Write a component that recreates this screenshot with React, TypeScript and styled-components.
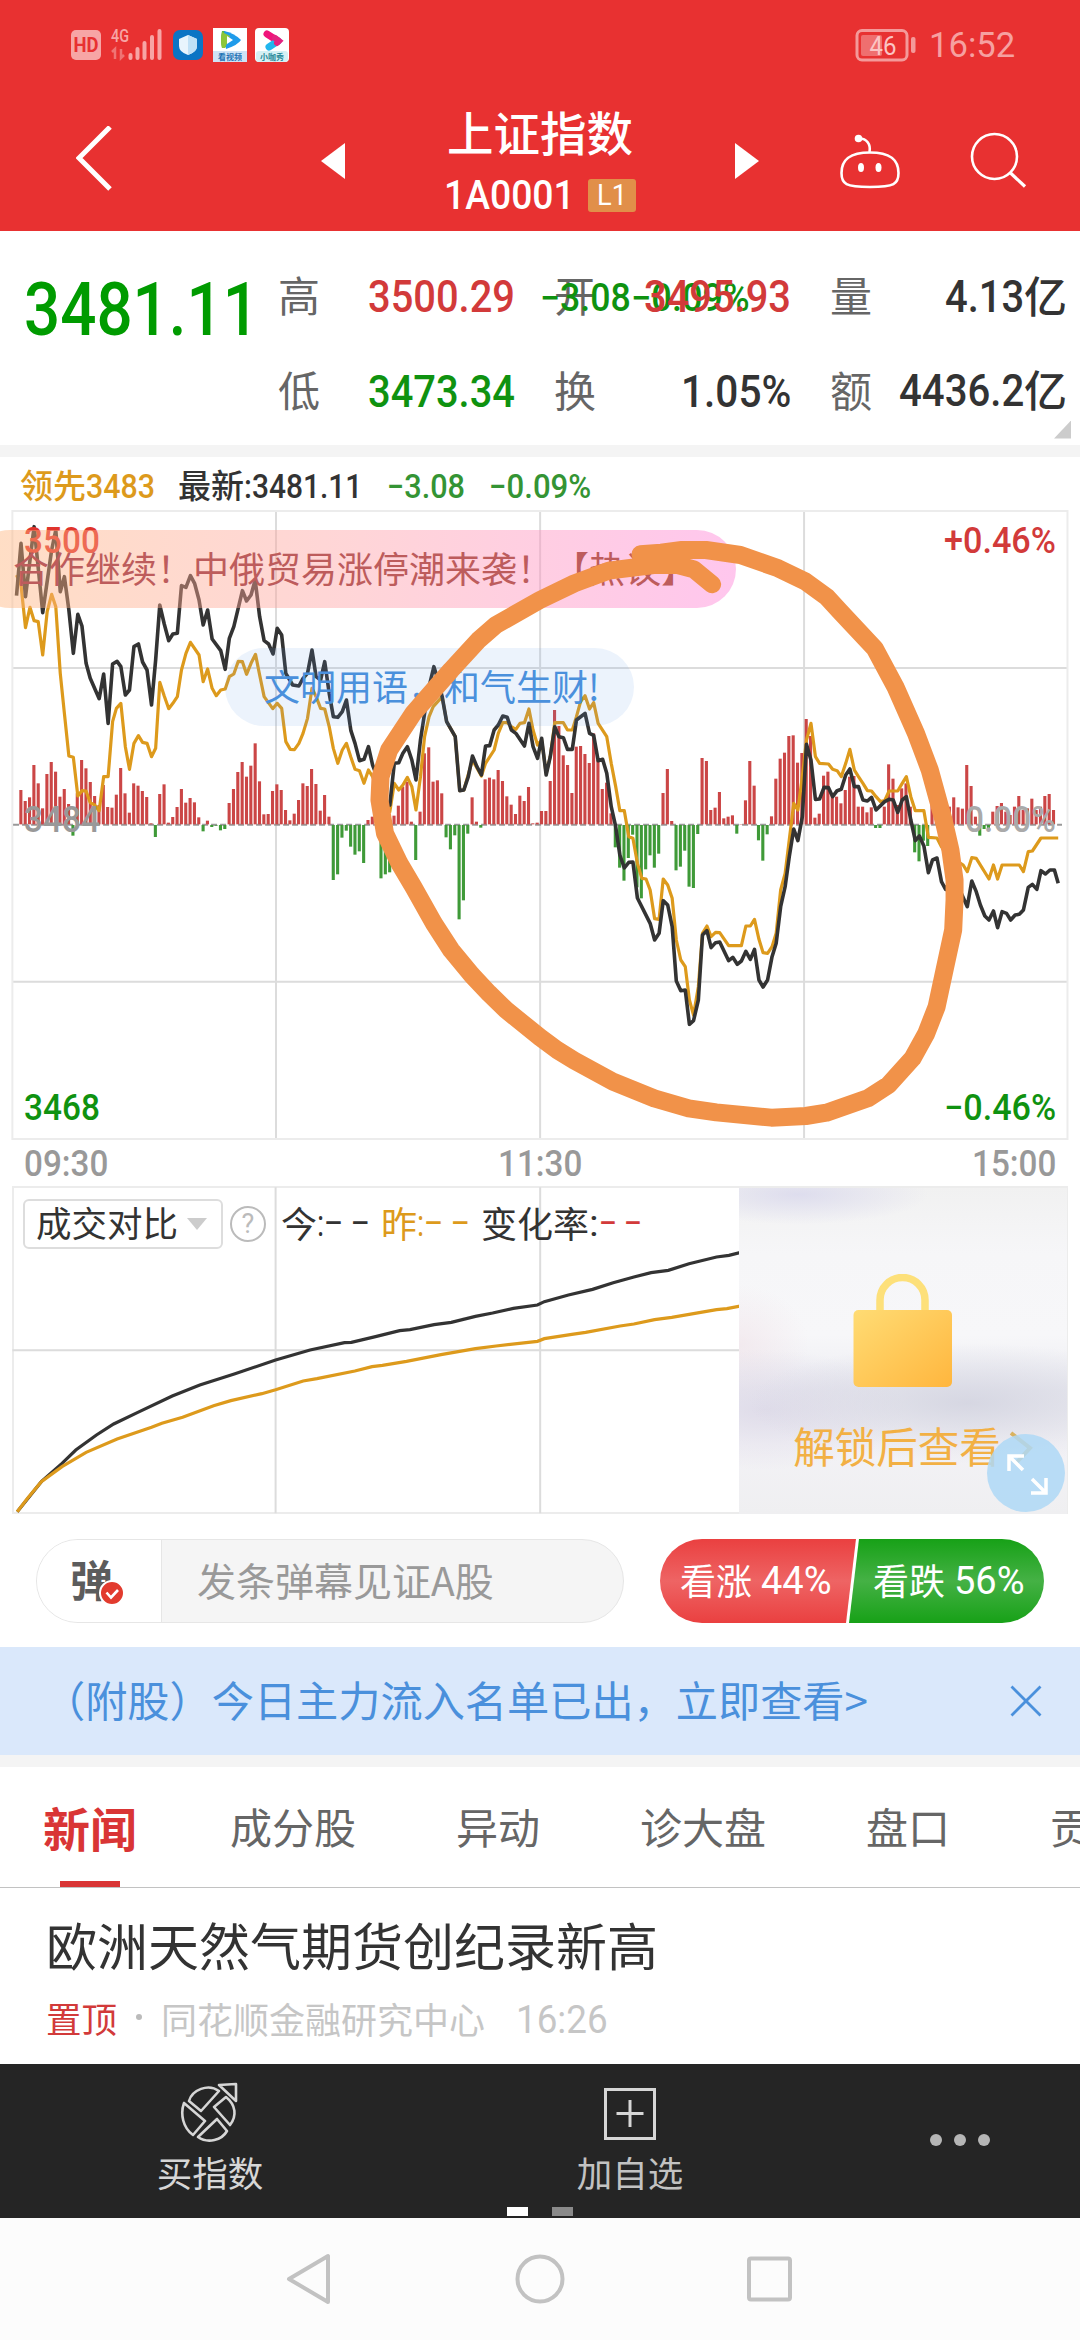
import React, { useLayoutEffect, useRef, useState } from "react";
import styled, { createGlobalStyle } from "styled-components";

const CJK = `"Noto Sans CJK SC", sans-serif`;
const NUM = `Roboto, "Noto Sans CJK SC", sans-serif`;

const GlobalStyle = createGlobalStyle`
  html, body { margin: 0; padding: 0; background: #fff; }
  *, *::before, *::after { box-sizing: border-box; }
  body { font-family: ${CJK}; color: #333; }
  svg { display: block; }
`;

/* ---------- condensed figures ---------- */

const FitBox = styled.span<{ $w: number; $size: number; $color: string; $weight: number }>`
  display: inline-block;
  flex: none;
  width: ${(p) => p.$w}px;
  height: ${(p) => p.$size}px;
  line-height: ${(p) => p.$size}px;
  font-family: ${NUM};
  font-size: ${(p) => p.$size}px;
  font-weight: ${(p) => p.$weight};
  color: ${(p) => p.$color};
  white-space: nowrap;
`;
const FitInner = styled.span`
  display: inline-block;
  transform-origin: 0 50%;
`;

type FitProps = { w: number; size: number; color?: string; weight?: number; children: React.ReactNode };

/** Figures squeezed to a given width, the way a DIN face sets them. */
function Fit({ w, size, color = "#333", weight = 500, children }: FitProps) {
  const ref = useRef<HTMLSpanElement>(null);
  const [scale, setScale] = useState(1);
  useLayoutEffect(() => {
    if (ref.current) setScale(w / ref.current.offsetWidth);
  }, [w, size, children]);
  return (
    <FitBox $w={w} $size={size} $color={color} $weight={weight}>
      <FitInner ref={ref} style={{ transform: `scaleX(${scale})` }}>
        {children}
      </FitInner>
    </FitBox>
  );
}

const Han = styled.span<{ $size: number; $color?: string; $weight?: number }>`
  display: block;
  flex: none;
  font-family: ${CJK};
  font-size: ${(p) => p.$size}px;
  line-height: ${(p) => p.$size}px;
  height: ${(p) => p.$size}px;
  margin-bottom: ${(p) => p.$size * 0.1}px;
  font-weight: ${(p) => p.$weight ?? 400};
  color: ${(p) => p.$color ?? "#333"};
  white-space: nowrap;
`;

const Page = styled.div`
  width: 1080px;
  height: 2340px;
  display: flex;
  flex-direction: column;
  background: #fff;
  overflow: hidden;
`;

/* ---------- header ---------- */

const Header = styled.header`
  height: 231px;
  flex: none;
  background: #e83131;
`;
const StatusBar = styled.div`
  height: 90px;
  display: flex;
  justify-content: space-between;
  align-items: center;
  padding: 0 65px 0 70px;
`;
const StatusSide = styled.div`
  display: flex;
  align-items: center;
`;
const TitleBar = styled.div`
  height: 141px;
  display: flex;
  align-items: center;
  padding-left: 76px;
`;
const IconSlot = styled.div<{ $ml?: number }>`
  flex: none;
  margin-left: ${(p) => p.$ml ?? 0}px;
`;
const TitleBlock = styled.div`
  width: 270px;
  margin-left: 60px;
  padding-top: 8px;
  display: flex;
  flex-direction: column;
  align-items: center;
`;
const TitleLine = styled.div`
  height: 62px;
  display: flex;
  align-items: center;
`;
const LevelBadge = styled.span`
  width: 48px;
  height: 33px;
  margin-left: 13px;
  display: flex;
  align-items: center;
  justify-content: center;
  border-radius: 3px;
  background: #e18f49;
`;

/* ---------- quote ---------- */

const Quote = styled.section`
  height: 214px;
  flex: none;
  display: grid;
  grid-template-columns: 278px 237px 39px 237px 39px 237px 13px;
  grid-template-rows: 131px 58px 25px;
  align-items: center;
`;
const PriceCell = styled.div`
  padding: 27px 0 0 24px;
  align-self: center;
`;
const ChangeCell = styled.div`
  display: flex;
  justify-content: space-between;
  padding: 3px 18px 0 25px;
`;
const Pair = styled.div<{ $col: number; $row: number }>`
  grid-column: ${(p) => p.$col};
  grid-row: ${(p) => p.$row};
  display: flex;
  align-items: center;
  justify-content: space-between;
`;
const PairValue = styled.div`
  display: flex;
  align-items: center;
`;
const Corner = styled.div`
  grid-column: 6 / 8;
  grid-row: 3;
  justify-self: end;
  margin: 0 9px 6px 0;
  width: 17px;
  height: 18px;
  background: #ccc;
  clip-path: polygon(100% 0, 100% 100%, 0 100%);
`;
const Gap = styled.div`
  height: 12px;
  flex: none;
  background: #f4f4f4;
`;

/* ---------- charts ---------- */

const Legend = styled.div`
  height: 53px;
  flex: none;
  display: flex;
  align-items: center;
  padding: 5px 0 0 20px;
`;
const Spacer = styled.span<{ $w: number }>`
  width: ${(p) => p.$w}px;
  flex: none;
`;
const MinuteChart = styled.section`
  position: relative;
  height: 630px;
  flex: none;
`;
const Layer = styled.svg`
  position: absolute;
  left: 0;
  top: 0;
  width: 1080px;
  height: 630px;
  overflow: visible;
`;
const AxisLabel = styled.div<{ $side: "left" | "right"; $top: number }>`
  position: absolute;
  ${(p) => p.$side}: 24px;
  top: ${(p) => p.$top}px;
  height: 36px;
`;
const Barrage = styled.div<{ $left: number; $top: number; $w: number; $bg: string; $pad: number }>`
  position: absolute;
  left: ${(p) => p.$left}px;
  top: ${(p) => p.$top}px;
  width: ${(p) => p.$w}px;
  height: 78px;
  padding-left: ${(p) => p.$pad}px;
  display: flex;
  align-items: center;
  border-radius: 39px;
  background: ${(p) => p.$bg};
`;
const TimeAxis = styled.div`
  height: 46px;
  flex: none;
  display: flex;
  align-items: center;
  justify-content: space-between;
  padding: 2px 24px 0;
`;
const CompareChart = styled.section`
  position: relative;
  height: 328px;
  flex: none;
  margin: 0 12px;
  display: flex;
  justify-content: space-between;
  border: 2px solid #ececec;
`;
const CompareSvg = styled.svg`
  position: absolute;
  left: -14px;
  top: -2px;
  width: 740px;
  height: 328px;
`;
const CompareBar = styled.div`
  position: relative;
  display: flex;
  align-items: center;
  height: 50px;
  margin: 11px 0 0 9px;
`;
const Picker = styled.div`
  width: 200px;
  height: 50px;
  display: flex;
  align-items: center;
  padding-left: 11px;
  border: 2px solid #ddd;
  border-radius: 6px;
`;
const Caret = styled.span`
  margin-left: 9px;
  border: 10px solid transparent;
  border-top: 12px solid #ccc;
  border-bottom: 0;
`;
const Help = styled.span`
  width: 36px;
  height: 36px;
  margin: 0 15px 0 7px;
  display: flex;
  align-items: center;
  justify-content: center;
  border: 2px solid #bbb;
  border-radius: 50%;
  font: 400 27px/30px ${NUM};
  color: #bbb;
`;
const LockPanel = styled.div`
  position: relative;
  width: 328px;
  height: 326px;
  margin-right: -1px;
  display: flex;
  flex-direction: column;
  align-items: center;
  background:
    radial-gradient(130px 30px at 18% 2%, rgba(215, 214, 236, 0.75), transparent),
    radial-gradient(220px 60px at 70% 66%, rgba(208, 209, 222, 0.8), transparent),
    radial-gradient(140px 60px at 8% 68%, rgba(218, 214, 230, 0.75), transparent),
    radial-gradient(70px 60px at 0% 48%, rgba(240, 226, 232, 0.6), transparent),
    linear-gradient(#f1f1f1, #f6f6f8 20%, #f7f7f9 45%, #ececf2 62%, #f3f2f6 78%, #efeff1);
`;
const UnlockLine = styled.div`
  display: flex;
  align-items: center;
  margin: 37px 0 0 22px;
`;
const ExpandButton = styled.div`
  position: absolute;
  right: 2px;
  top: 246px;
  width: 78px;
  height: 78px;
  border-radius: 50%;
  background: rgba(174, 216, 246, 0.85);
`;

/* ---------- comments + vote ---------- */

const TalkRow = styled.section`
  height: 133px;
  flex: none;
  display: flex;
  justify-content: space-between;
  padding: 25px 36px 0;
`;
const TalkInput = styled.div`
  width: 588px;
  height: 84px;
  display: flex;
  border: 1px solid #e6e6e6;
  border-radius: 42px;
  overflow: hidden;
  background: #f5f5f5;
`;
const TalkToggle = styled.div`
  position: relative;
  width: 125px;
  padding: 0 0 0 33px;
  display: flex;
  align-items: center;
  border-right: 1px solid #e6e6e6;
  background: #fff;
`;
const ToggleTick = styled.svg`
  position: absolute;
  left: 61px;
  top: 39px;
`;
const Placeholder = styled.div`
  display: flex;
  align-items: center;
  padding-left: 35px;
`;
const Vote = styled.div`
  width: 384px;
  height: 84px;
  display: flex;
  border-radius: 42px;
  overflow: hidden;
`;
const VoteSide = styled.div<{ $up?: boolean }>`
  width: ${(p) => (p.$up ? 197 : 196)}px;
  margin-left: ${(p) => (p.$up ? 0 : -9)}px;
  flex: none;
  display: flex;
  align-items: center;
  padding-left: ${(p) => (p.$up ? 20 : 25)}px;
  background: ${(p) =>
    p.$up ? "linear-gradient(#ea4040, #ee6464 50%, #ea4040)" : "linear-gradient(#17a117, #45b145 50%, #17a117)"};
  clip-path: ${(p) =>
    p.$up ? "polygon(0 0, 196px 0, 186px 100%, 0 100%)" : "polygon(11px 0, 100% 0, 100% 100%, 1px 100%)"};
`;
const Notice = styled.div`
  height: 108px;
  flex: none;
  display: flex;
  align-items: center;
  justify-content: space-between;
  padding: 0 38px 0 43px;
  background: #dae8fb;
`;

/* ---------- news ---------- */

const Tabs = styled.nav`
  height: 121px;
  flex: none;
  display: flex;
  gap: 100px;
  padding-left: 43px;
  border-bottom: 1px solid #c2c2c2;
  overflow: hidden;
`;
const Tab = styled.div<{ $active?: boolean }>`
  flex: none;
  display: flex;
  flex-direction: column;
  align-items: center;
  justify-content: center;
  border-bottom: 0;
  padding-top: 3px;
  margin-right: ${(p) => (p.$active ? -7 : 0)}px;
  background: ${(p) =>
    p.$active ? "linear-gradient(#d93535, #d93535) 17px 100% / 60px 6px no-repeat" : "none"};
`;
const News = styled.article`
  height: 176px;
  flex: none;
  padding: 31px 0 0 46px;
`;
const Meta = styled.div`
  display: flex;
  align-items: center;
  height: 40px;
  margin-top: 30px;
`;
const Dot = styled.span`
  width: 6px;
  height: 6px;
  margin: 0 19px 6px;
  border-radius: 50%;
  background: #bbb;
`;

/* ---------- bottom ---------- */

const ActionBar = styled.footer`
  height: 154px;
  flex: none;
  display: grid;
  grid-template-columns: 420px 420px 240px;
  grid-template-rows: 143px 9px;
  background: #252525;
`;
const Action = styled.div`
  display: flex;
  flex-direction: column;
  align-items: center;
  gap: 10px;
  padding-top: 18px;
`;
const More = styled.div`
  display: flex;
  justify-content: center;
  gap: 12px;
  padding-top: 70px;
`;
const MoreDot = styled.span`
  width: 12px;
  height: 12px;
  border-radius: 50%;
  background: #b6b6b6;
`;
const Pager = styled.div`
  grid-column: 1 / 4;
  display: flex;
  justify-content: center;
  gap: 24px;
`;
const PagerMark = styled.span<{ $on?: boolean }>`
  width: 21px;
  height: 9px;
  background: ${(p) => (p.$on ? "#fff" : "#8a8a8a")};
`;
const NavBar = styled.div`
  flex: 1;
  background: #fcfcfc;
`;

/* ---------- data ---------- */

// One signed bar per minute, starting at 09:31.
const BARS = [
  103, 70, 81, 178, 123, 48, 151, 187, 158, 83, 106, 61, -32, 93, 193, 168, 127, 85, 58, 118, 52, 50, 89, 169, 93, 35,
  123, 116, 100, 82, 3, -36, 91, 120, 5, 22, 52, 106, 65, 79, 66, 21, -19, 11, -6, -2, -16, -12, 64, 106, 157, 187,
  143, 176, 243, 129, 30, 31, 100, 120, 103, 43, 12, 32, 73, 123, 115, 166, 121, 41, 88, 23, -165, -148, -38, -17,
  -65, -89, -79, -114, 13, 23, 33, -160, -148, -142, 26, 56, 113, 128, 8, -105, 38, 213, 231, 128, 132, 93, -37, -73,
  -31, -283, -226, -26, 81, 8, -8, 135, 140, 135, 163, 130, 84, 59, 31, 86, 70, 112, 3, 5, 40, 40, 130, 343, 295, 207,
  178, 94, 233, 235, 211, 184, 273, 193, 106, 125, 33, -67, -128, -167, -99, -29, -187, -220, -133, -91, -128, -86,
  94, 166, 10, -136, -125, -77, -185, -189, -27, 199, 190, 43, 50, 97, 18, 23, 27, -26, 1, 72, 190, 116, -46, -107,
  -28, 24, 137, 197, 215, 265, 267, 185, 214, 316, 265, 20, 32, 146, 158, 86, 83, 63, 103, 143, 145, 53, 53, 36, 51,
  -9, -9, 53, 180, 137, 58, 108, 123, 53, -82, -109, -47, -63, 63, 73, 60, 50, 53, 81, 51, 47, 178, 115, 23, -32, -12,
  -12, 38, 55, 64, 38, 28, 53, 85, 43, 48, 77, 43, 53, 85, 91, 43,
];

const PRICE =
  "48,287 61,130 74,290 99,80 124,338 150,150 162,90 175,275 187,230 200,330 213,460 226,343 238,378 250,490 262,535 288,596 301,522 314,670 327,492 340,484 351,500 364,585 376,570 389,440 402,432 414,486 427,510 440,615 452,480 464,315 477,372 490,422 502,402 515,400 527,257 540,262 553,227 565,250 578,300 590,375 603,330 616,417 641,452 654,508 666,415 679,380 704,272 716,303 729,285 741,240 754,350 767,422 780,432 793,462 805,385 818,405 830,520 850,555 868,558 880,535 893,520 906,450 918,530 931,540 943,485 956,580 968,650 981,652 994,635 1006,600 1019,692 1031,730 1044,782 1057,778 1070,740 1082,795 1095,830 1110,900 1132,915 1145,790 1158,788 1170,760 1183,740 1196,780 1208,840 1221,720 1233,640 1246,560 1260,500 1272,540 1284,590 1297,665 1322,710 1335,872 1347,870 1360,830 1372,768 1385,800 1398,825 1410,738 1422,737 1435,690 1447,675 1460,648 1473,652 1485,690 1498,700 1523,738 1536,670 1548,740 1561,775 1573,715 1586,825 1598,770 1611,680 1623,710 1636,713 1648,748 1662,748 1674,660 1699,640 1712,700 1724,706 1737,782 1750,778 1762,820 1775,920 1788,980 1800,1065 1813,1104 1826,1087 1838,1086 1851,1194 1888,1270 1901,1320 1914,1300 1926,1202 1939,1215 1952,1280 1964,1443 1977,1472 1990,1470 2002,1573 2014,1562 2028,1500 2040,1305 2053,1292 2065,1343 2078,1328 2090,1326 2116,1382 2128,1372 2141,1393 2153,1383 2166,1354 2179,1378 2191,1348 2204,1440 2216,1461 2229,1440 2242,1370 2254,1330 2267,1220 2280,1160 2292,1070 2305,987 2317,1022 2330,950 2342,733 2355,780 2368,898 2380,897 2393,862 2406,863 2418,890 2431,872 2443,868 2456,825 2468,807 2481,860 2493,860 2506,900 2519,903 2531,892 2544,930 2569,905 2582,898 2594,900 2607,937 2620,900 2632,890 2645,960 2658,1022 2670,1008 2683,1038 2696,1118 2708,1080 2721,1074 2734,1145 2746,1168 2760,1140 2783,1160 2809,1220 2822,1143 2835,1175 2847,1215 2860,1248 2872,1260 2885,1233 2897,1283 2910,1235 2923,1240 2935,1260 2948,1245 2960,1243 2972,1230 2986,1162 2998,1153 3011,1168 3023,1112 3036,1122 3049,1110 3062,1110 3073,1150";

const LEAD =
  "48,225 61,255 74,383 87,322 99,362 111,365 124,465 137,335 150,283 162,320 175,520 187,640 200,768 213,772 226,888 238,872 250,873 262,908 275,915 288,932 301,830 314,830 327,665 338,625 351,610 364,740 376,808 389,730 402,707 414,727 427,730 440,770 452,745 464,547 477,588 490,626 502,610 515,590 527,510 540,460 553,427 578,465 590,545 603,507 616,565 628,587 641,570 654,567 666,530 679,522 692,484 704,485 716,523 729,490 742,463 754,525 767,590 792,626 805,610 818,625 830,725 843,748 855,749 868,730 880,700 893,655 906,565 918,590 931,625 943,627 956,680 968,745 981,790 994,750 1006,730 1019,772 1031,808 1044,812 1057,850 1070,810 1082,830 1110,900 1132,935 1145,850 1158,870 1170,855 1183,832 1196,860 1208,930 1221,830 1233,710 1246,650 1258,620 1284,590 1297,665 1322,710 1335,872 1347,870 1372,780 1398,828 1410,790 1435,750 1447,700 1460,668 1473,668 1485,680 1498,688 1510,670 1523,668 1536,627 1548,690 1561,735 1573,720 1586,820 1598,770 1611,668 1636,668 1648,690 1662,690 1674,650 1686,605 1699,587 1712,627 1724,608 1737,670 1762,710 1775,790 1788,860 1800,932 1813,932 1826,1010 1838,1015 1851,1090 1864,1135 1876,1137 1888,1170 1901,1256 1914,1258 1926,1137 1939,1155 1952,1195 1964,1320 1977,1380 1990,1400 2002,1500 2014,1545 2028,1460 2040,1300 2053,1278 2065,1310 2078,1297 2090,1298 2116,1337 2153,1337 2166,1278 2179,1278 2191,1258 2204,1318 2216,1358 2229,1360 2242,1340 2254,1300 2267,1170 2280,1120 2292,1020 2305,910 2317,930 2330,830 2342,720 2355,670 2368,770 2380,790 2406,792 2418,808 2431,812 2443,830 2456,790 2468,748 2481,810 2493,830 2506,850 2519,872 2531,873 2544,890 2557,905 2569,902 2582,873 2607,873 2620,850 2632,830 2645,890 2658,932 2683,932 2696,1012 2721,1014 2734,1040 2760,1070 2797,1095 2809,1115 2822,1073 2835,1075 2872,1137 2885,1095 2897,1137 2910,1095 2960,1095 2972,1115 2986,1055 2998,1053 3023,1014 3073,1014";

const MARKER =
  "1860,163 1920,158 1980,150 2050,150 2150,165 2260,205 2340,245 2400,290 2440,335 2540,445 2600,560 2660,700 2700,810 2740,960 2760,1050 2772,1140 2772,1200 2768,1290 2745,1400 2720,1520 2690,1600 2650,1675 2580,1755 2520,1795 2400,1838 2340,1848 2240,1853 2080,1837 2000,1825 1900,1795 1780,1745 1668,1682 1618,1650 1568,1612 1470,1530 1420,1480 1370,1425 1310,1350 1260,1270 1200,1160 1160,1090 1118,1000 1102,900 1105,830 1130,750 1200,640 1310,510 1390,420 1440,375 1568,300 1668,250 1768,212 1898,195 1968,195 2015,208 2068,253";

const TODAY =
  "25,995 60,905 90,850 110,810 140,765 165,732 200,697 250,648 290,615 340,582 400,540 450,510 500,488 510,487 545,470 580,452 595,449 630,434 655,427 690,409 715,399 745,385 780,375 790,365 825,345 860,328 890,308 920,291 945,278 970,271 1000,251 1040,231 1058,226 1074,218";
const YESTERDAY =
  "25,995 40,955 60,905 90,860 125,817 170,777 220,742 235,730 265,712 310,677 335,662 380,641 400,629 440,603 460,596 515,573 540,560 555,556 590,544 640,524 690,506 720,498 780,484 790,476 830,463 850,457 900,438 920,432 950,419 975,412 1040,389 1055,386 1074,378";

const RED = "#d23a3a";
const GREEN = "#0f9210";
const AMBER = "#dd9a1c";

/* ---------- drawings ---------- */

const StatusIcons = () => (
  <svg width="222" height="36" viewBox="70 27 222 36">
    <rect x="71" y="30" width="30" height="30" rx="5" fill="#f7a5a5" />
    <text x="86" y="52" textAnchor="middle" fontFamily="Roboto" fontWeight="700" fontSize="20" textLength="25" lengthAdjust="spacingAndGlyphs" fill="#e83131">HD</text>
    <text x="111" y="42" fontFamily="Roboto" fontWeight="500" fontSize="18" textLength="18" lengthAdjust="spacingAndGlyphs" fill="#f7a5a5">4G</text>
    <path d="M112 52l3-3v10M121 49v9l3-3" stroke="#ef7474" strokeWidth="2.5" fill="none" />
    <path d="M130.500 55v3M137.500 49v9M144.500 43v15M152 37v21M159.500 31v27" stroke="#f7a5a5" strokeWidth="4" strokeLinecap="round" />
    <rect x="173" y="30" width="30" height="30" rx="7" fill="#0b74c4" />
    <path d="M188 35l9 4v7q0 6-9 9q-9-3-9-9v-7z" fill="#e8f4fd" />
    <path d="M188 35l9 4v7q0 6-9 9z" fill="#bfe0f6" />
    <rect x="213" y="28" width="34" height="34" fill="#fff" />
    <path d="M222 31q-2 9 0 17q3 0 8-3l-5-14z" fill="#58b947" />
    <path d="M224 31q10 2 17 9q-3 5-15 9z" fill="#1f9bea" />
    <path d="M222 32l8 4-5 12-3 0q-2-8 0-16z" fill="#8cc63a" />
    <path d="M227 36l6 4-6 4z" fill="#fff" />
    <rect x="213" y="51" width="34" height="11" fill="#cfe3f6" />
    <text x="230" y="60" textAnchor="middle" fontFamily="Noto Sans CJK SC" fontWeight="700" fontSize="8" fill="#2273b5">看视频</text>
    <rect x="255" y="28" width="34" height="34" rx="4" fill="#fff" />
    <path d="M267 34l11 7" stroke="#f0137b" strokeWidth="7" strokeLinecap="round" />
    <path d="M278 41l-9 6" stroke="#21b6ee" strokeWidth="7" strokeLinecap="round" />
    <path d="M275 38l4 3-2 2" stroke="#e3237f" strokeWidth="6" strokeLinecap="round" fill="none" />
    <rect x="256" y="51" width="32" height="11" rx="3" fill="#d5f0f4" />
    <text x="272" y="60" textAnchor="middle" fontFamily="Noto Sans CJK SC" fontWeight="700" fontSize="8" fill="#2a8a9a">小咖秀</text>
  </svg>
);

const Battery = () => (
  <svg width="62" height="34" viewBox="855 27 62 34">
    <rect x="857" y="29.500" width="50" height="29.500" rx="5" fill="none" stroke="#f49a9a" strokeWidth="3" />
    <rect x="861" y="34" width="21" height="21" rx="2" fill="#ef6f6f" />
    <rect x="911" y="36" width="4.500" height="16" rx="2" fill="#f49a9a" />
    <text x="883" y="54" textAnchor="middle" fontFamily="Roboto" fontSize="25" textLength="27" lengthAdjust="spacingAndGlyphs" fill="#fbc4c4">46</text>
  </svg>
);

const Robot = () => (
  <svg width="64" height="60" viewBox="838 130 64 60" fill="none" stroke="#fff" strokeWidth="2.600">
    <path d="M841.500 172c0-14 9-20.500 28.500-20.500s28.500 6.500 28.500 20.500c0 11-4 14-28.500 14s-28.500-3-28.500-14z" />
    <path d="M869.500 151c1.500-8-3-13.500-10-13.500" />
    <circle cx="858.500" cy="137.500" r="2.800" fill="#fff" stroke="none" style={undefined} />
    <circle cx="858.500" cy="137.500" r="2.500" fill="#fff" />
    <ellipse cx="861" cy="166.500" rx="3" ry="4.500" fill="#fff" stroke="none" />
    <ellipse cx="878.500" cy="166.500" rx="3" ry="4.500" fill="#fff" stroke="none" />
  </svg>
);

function MinuteLines() {
  return (
    <Layer viewBox="0 30 3136.300 1890" preserveAspectRatio="none">
      <g fill="none" stroke="#dcdcdc" strokeWidth="2">
        <path vectorEffect="non-scaling-stroke" d="M36 504H3100M36 1445H3100M801.500 33V1917M1568.500 33V1917M2335 33V1917" />
        <path vectorEffect="non-scaling-stroke" stroke="#ececec" d="M36 33H3100V1917H36z" />
        <path vectorEffect="non-scaling-stroke" stroke="#999" strokeDasharray="6 3" d="M38 974H3084" />
      </g>
      {BARS.map((v, i) => (
        <rect
          key={i}
          x={48 + 12.6 * (i + 1) - 4.5}
          width="9"
          y={v > 0 ? 973 - v : 975}
          height={Math.abs(v)}
          fill={v > 0 ? "#cb4646" : "#3f9a38"}
        />
      ))}
      <g fill="none" strokeLinejoin="round" strokeWidth="3.200">
        <polyline vectorEffect="non-scaling-stroke" stroke={AMBER} points={LEAD} />
        <polyline vectorEffect="non-scaling-stroke" stroke="#333" strokeWidth="3.600" points={PRICE} />
      </g>
    </Layer>
  );
}

const Lock = () => (
  <svg width="100" height="114" viewBox="854 1273 100 114">
    <defs>
      <linearGradient id="lockBody" x1="0" y1="0" x2="1" y2="1">
        <stop offset="0" stopColor="#ffdc74" />
        <stop offset="1" stopColor="#ffb63e" />
      </linearGradient>
    </defs>
    <path d="M881 1312V1299a22.500 22.500 0 0 1 45 0V1312" fill="none" stroke="#fde07a" strokeWidth="7.500" />
    <rect x="854.500" y="1309" width="98.500" height="77" rx="5" fill="url(#lockBody)" />
  </svg>
);

const TradeIcon = () => (
  <svg width="60" height="62" viewBox="0 0 60 62" fill="none" stroke="#d6d6d6" strokeWidth="2.600" strokeLinejoin="round">
    <path d="M39 9C28 1 12 8 9 19L21 29Z" />
    <path d="M46 15L34 25L50 43C57 34 56 23 46 15Z" />
    <path d="M4 21C0 32 3 46 13 53L25 39Z" />
    <path d="M37 37L18 55C28 62 42 58 47 49Z" />
    <path d="M39 3L56 2V19Z" />
  </svg>
);

/* ---------- page ---------- */

export default function App() {
  return (
    <Page>
      <GlobalStyle />
      <Header>
        <StatusBar>
          <StatusSide>
            <StatusIcons />
          </StatusSide>
          <StatusSide>
            <Battery />
            <Spacer $w={12} />
            <Fit w={86} size={35} weight={400} color="#f6a0a0">16:52</Fit>
          </StatusSide>
        </StatusBar>
        <TitleBar>
          <IconSlot>
            <svg width="36" height="70" viewBox="76 126 36 70">
              <path d="M110 128L79 159L110 190" transform="translate(0 -1)" fill="none" stroke="#fff" strokeWidth="5" />
            </svg>
          </IconSlot>
          <IconSlot $ml={209}>
            <svg width="24" height="36" viewBox="0 0 24 36"><path d="M24 0V36L0 18z" fill="#fff" /></svg>
          </IconSlot>
          <TitleBlock>
            <TitleLine>
              <Han $size={46.500} $weight={500} $color="#fff">上证指数</Han>
            </TitleLine>
            <TitleLine>
              <Fit w={131} size={41} color="#fff">1A0001</Fit>
              <LevelBadge>
                <Fit w={30} size={29} weight={400} color="#fff">L1</Fit>
              </LevelBadge>
            </TitleLine>
          </TitleBlock>
          <IconSlot $ml={60}>
            <svg width="24" height="36" viewBox="0 0 24 36"><path d="M0 0V36L24 18z" fill="#fff" /></svg>
          </IconSlot>
          <IconSlot $ml={79}>
            <Robot />
          </IconSlot>
          <IconSlot $ml={67}>
            <svg width="60" height="60" viewBox="969 130 60 60" fill="none" stroke="#fff" strokeWidth="2.600">
              <circle cx="994.500" cy="155.500" r="22.500" />
              <path d="M1010 171.500L1025 185.500" strokeWidth="3.200" />
            </svg>
          </IconSlot>
        </TitleBar>
      </Header>

      <Quote>
        <PriceCell>
          <Fit w={235} size={74} color="#009b00">3481.11</Fit>
        </PriceCell>
        <ChangeCell style={undefined}>
          <Fit w={91} size={38} color={GREEN}>−3.08</Fit>
          <Fit w={119} size={38} color={GREEN}>−0.09%</Fit>
        </ChangeCell>
        <Pair $col={2} $row={1}>
          <Han $size={42} $color="#666">高</Han>
          <Fit w={147} size={45} color={RED}>3500.29</Fit>
        </Pair>
        <Pair $col={4} $row={1}>
          <Han $size={42} $color="#666">开</Han>
          <Fit w={147} size={45} color={RED}>3495.93</Fit>
        </Pair>
        <Pair $col={6} $row={1}>
          <Han $size={42} $color="#666">量</Han>
          <PairValue>
            <Fit w={79} size={45}>4.13</Fit>
            <Han $size={43} $weight={500}>亿</Han>
          </PairValue>
        </Pair>
        <Pair $col={2} $row={2}>
          <Han $size={42} $color="#666">低</Han>
          <Fit w={147} size={45} color={GREEN}>3473.34</Fit>
        </Pair>
        <Pair $col={4} $row={2}>
          <Han $size={42} $color="#666">换</Han>
          <Fit w={110} size={45}>1.05%</Fit>
        </Pair>
        <Pair $col={6} $row={2}>
          <Han $size={42} $color="#666">额</Han>
          <PairValue>
            <Fit w={125} size={45}>4436.2</Fit>
            <Han $size={43} $weight={500}>亿</Han>
          </PairValue>
        </Pair>
        <Corner />
      </Quote>
      <Gap />

      <Legend>
        <Han $size={33} $weight={500} $color={AMBER}>领先</Han>
        <Fit w={69} size={33} color={AMBER}>3483</Fit>
        <Spacer $w={23} />
        <Han $size={33} $weight={500}>最新</Han>
        <Fit w={118} size={33}>:3481.11</Fit>
        <Spacer $w={25} />
        <Fit w={78} size={33} color="#349434">−3.08</Fit>
        <Spacer $w={24} />
        <Fit w={102} size={33} color="#349434">−0.09%</Fit>
      </Legend>

      <MinuteChart>
        <MinuteLines />
        <AxisLabel $side="left" $top={13}><Fit w={76} size={36} color="#e0342c">3500</Fit></AxisLabel>
        <AxisLabel $side="right" $top={13}><Fit w={112} size={36} color={RED}>+0.46%</Fit></AxisLabel>
        <AxisLabel $side="left" $top={292}><Fit w={76} size={36} color="#999">3484</Fit></AxisLabel>
        <AxisLabel $side="right" $top={292}><Fit w={91} size={36} color="#aaa">0.00%</Fit></AxisLabel>
        <AxisLabel $side="left" $top={580}><Fit w={76} size={36} color={GREEN}>3468</Fit></AxisLabel>
        <AxisLabel $side="right" $top={580}><Fit w={112} size={36} color={GREEN}>−0.46%</Fit></AxisLabel>
        <Barrage $left={-29} $top={20} $w={765} $pad={42} $bg="linear-gradient(90deg, rgba(255,181,120,.44), rgba(255,160,165,.44) 50%, rgba(255,126,215,.44))">
          <Han $size={36} $color="#bd5c5c">合作继续！中俄贸易涨停潮来袭！【热议】</Han>
        </Barrage>
        <Barrage $left={225} $top={138} $w={409} $pad={39} $bg="rgba(100,155,230,.12)">
          <Han $size={36} $color="#4a90dc">文明用语，和气生财!</Han>
        </Barrage>
        <Layer viewBox="0 30 3136.300 1890" preserveAspectRatio="none">
          <polyline vectorEffect="non-scaling-stroke" points={MARKER} fill="none" stroke="#f19249" strokeWidth="18" strokeLinecap="round" strokeLinejoin="round" />
        </Layer>
      </MinuteChart>

      <TimeAxis>
        <Fit w={84} size={36} color="#999">09:30</Fit>
        <Fit w={84} size={36} color="#999">11:30</Fit>
        <Fit w={84} size={36} color="#999">15:00</Fit>
      </TimeAxis>

      <CompareChart>
        <CompareSvg viewBox="0 18 1074 984" preserveAspectRatio="none">
          <g fill="none">
            <path vectorEffect="non-scaling-stroke" stroke="#dcdcdc" strokeWidth="2" d="M18 511H1074M400 22V1000M784 22V1000" />
            <polyline vectorEffect="non-scaling-stroke" stroke="#333" strokeWidth="3.200" points={TODAY} />
            <polyline vectorEffect="non-scaling-stroke" stroke={AMBER} strokeWidth="3.200" points={YESTERDAY} />
          </g>
        </CompareSvg>
        <CompareBar>
          <Picker>
            <Han $size={35.500}>成交对比</Han>
            <Caret />
          </Picker>
          <Help>?</Help>
          <Han $size={36}>今</Han>
          <Fit w={53} size={36} weight={400}>:– –</Fit>
          <Spacer $w={11} />
          <Han $size={36} $color={AMBER}>昨</Han>
          <Fit w={53} size={36} weight={400} color={AMBER}>:– –</Fit>
          <Spacer $w={11} />
          <Han $size={36}>变化率</Han>
          <Fit w={10} size={36} weight={400}>:</Fit>
          <Fit w={43} size={36} weight={400} color={RED}>– –</Fit>
        </CompareBar>
        <LockPanel>
          <Spacer $w={1} style={undefined} />
          <IconSlot as={LockSlot}>
            <Lock />
          </IconSlot>
          <UnlockLine>
            <Han $size={41.500} $color="#f2b044">解锁后查看</Han>
            <svg width="34" height="40" viewBox="0 0 34 40"><path d="M10 5L29 20L16 34" fill="none" stroke="#d9b25e" strokeWidth="4" /></svg>
          </UnlockLine>
          <ExpandButton>
            <svg width="78" height="78" viewBox="0 0 78 78" fill="none" stroke="#fff" strokeWidth="3.500">
              <path d="M22 37V22H37M22 22L36 36M59 44V59H44M59 59L45 45" />
            </svg>
          </ExpandButton>
        </LockPanel>
      </CompareChart>

      <TalkRow>
        <TalkInput>
          <TalkToggle>
            <Han $size={43} $weight={700} $color="#5c5c5c">弹</Han>
            <ToggleTick width="28" height="28" viewBox="0 0 28 28">
              <circle cx="14" cy="14" r="12" fill="#e23b2e" stroke="#fff" strokeWidth="2" />
              <path d="M8.500 13.500l4.500 5 7-7.500" fill="none" stroke="#fff" strokeWidth="2.600" />
            </ToggleTick>
          </TalkToggle>
          <Placeholder>
            <Han $size={39} $color="#999">发条弹幕见证A股</Han>
          </Placeholder>
        </TalkInput>
        <Vote>
          <VoteSide $up>
            <Han $size={36} $color="#fff">看涨</Han>
            <Spacer $w={9} />
            <Fit w={71} size={38} weight={400} color="#fff">44%</Fit>
          </VoteSide>
          <VoteSide>
            <Han $size={36} $color="#fff">看跌</Han>
            <Spacer $w={9} />
            <Fit w={71} size={38} weight={400} color="#fff">56%</Fit>
          </VoteSide>
        </Vote>
      </TalkRow>

      <Notice>
        <Han $size={42.200} $color="#4a90dc">（附股）今日主力流入名单已出，立即查看&gt;</Han>
        <svg width="32" height="32" viewBox="0 0 32 32"><path d="M1.500 1.500L30.500 30.500M30.500 1.500L1.500 30.500" stroke="#4a90dc" strokeWidth="2.800" /></svg>
      </Notice>
      <Gap />

      <Tabs>
        <Tab $active><Han $size={47} $weight={700} $color="#d93535">新闻</Han></Tab>
        <Tab><Han $size={42} $color="#666">成分股</Han></Tab>
        <Tab><Han $size={42} $color="#666">异动</Han></Tab>
        <Tab><Han $size={42} $color="#666">诊大盘</Han></Tab>
        <Tab><Han $size={42} $color="#666">盘口</Han></Tab>
        <Tab><Han $size={42} $color="#666">贡献</Han></Tab>
      </Tabs>

      <News>
        <Han $size={51}>欧洲天然气期货创纪录新高</Han>
        <Meta>
          <Han $size={35.500} $color={RED}>置顶</Han>
          <Dot />
          <Han $size={36} $color="#c6c6c6">同花顺金融研究中心</Han>
          <Spacer $w={31} />
          <Fit w={92} size={38} weight={400} color="#c6c6c6">16:26</Fit>
        </Meta>
      </News>

      <ActionBar>
        <Action>
          <TradeIcon />
          <Han $size={35.500} $color="#d6d6d6">买指数</Han>
        </Action>
        <Action>
          <svg width="60" height="62" viewBox="0 0 60 62" fill="none" stroke="#d6d6d6" strokeWidth="3">
            <path d="M5.500 7.500H54.500V56.500H5.500zM30 18V45M16.500 31.500H43.500" />
          </svg>
          <Han $size={35.500} $color="#c2c2c2">加自选</Han>
        </Action>
        <More>
          <MoreDot />
          <MoreDot />
          <MoreDot />
        </More>
        <Pager>
          <PagerMark $on />
          <PagerMark />
        </Pager>
      </ActionBar>

      <NavBar>
        <svg width="1080" height="122" viewBox="0 2218 1080 122" fill="none" stroke="#c2c2c2" strokeWidth="4" strokeLinejoin="round">
          <path d="M328 2256V2302L289 2279z" />
          <circle cx="540" cy="2279" r="22.500" />
          <rect x="749" y="2258.500" width="41" height="41" rx="2" />
        </svg>
      </NavBar>
    </Page>
  );
}

const LockSlot = styled.div`
  margin-top: 86px;
`;
